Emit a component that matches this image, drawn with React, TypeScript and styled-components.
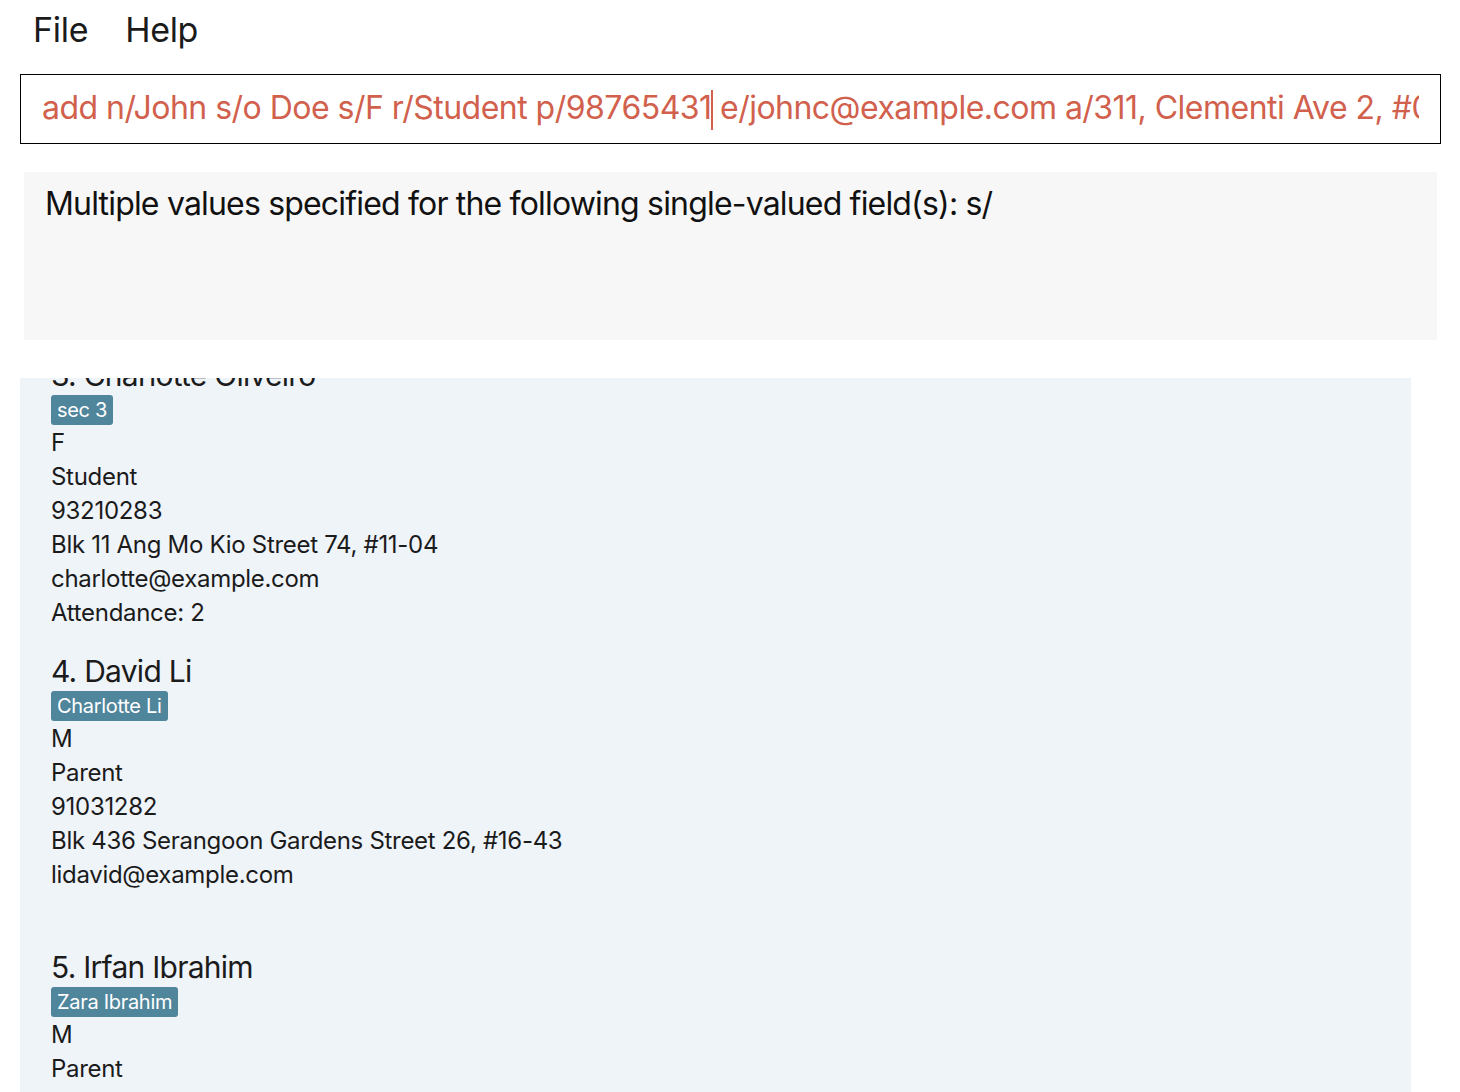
import React, { useLayoutEffect, useRef } from "react";
import styled, { createGlobalStyle } from "styled-components";

const Global = createGlobalStyle`
  html, body { margin: 0; padding: 0; background: #ffffff; }
  body { width: 1460px; height: 1092px; overflow: hidden; font-family: Inter, "Noto Sans", sans-serif; }
  * { box-sizing: border-box; }
`;

const Page = styled.div`
  display: flex;
  flex-direction: column;
  height: 1092px;
  background: #ffffff;
`;

const MenuBar = styled.nav`
  display: flex;
  height: 58px;
  align-items: center;
  padding: 0 0 0 20px;
`;

const MenuItem = styled.span`
  font-size: 34px;
  color: #1b1b1b;
  padding: 0 13px;
  margin-right: 11px;
  letter-spacing: -0.3px;
`;

const CommandBox = styled.div`
  margin: 16px 19px 0 20px;
  height: 70px;
  border: 1px solid #000000;
  display: flex;
  align-items: center;
  padding: 0 21px;
  overflow: hidden;
`;

const CommandText = styled.div`
  white-space: nowrap;
  overflow: hidden;
  font-size: 32px;
  color: #d1604d;
  letter-spacing: -0.52px;
  width: 100%;
`;

const Caret = styled.span`
  display: inline-block;
  width: 2px;
  height: 40px;
  background: #d1604d;
  vertical-align: middle;
  margin: 0 -1px;
`;

const ResultBox = styled.div`
  margin: 28px 23px 0 24px;
  height: 168px;
  background: #f7f7f7;
  padding: 12px 21px;
  font-size: 32px;
  color: #111111;
  letter-spacing: -0.82px;
`;

const ListPanel = styled.div`
  margin: 38px 49px 0 20px;
  flex: 1;
  background: #eff4f9;
  overflow: hidden;
`;

const Card = styled.div`
  padding: 12px 31px 11px 31px;
  display: flex;
  flex-direction: column;
  height: 296px;
`;

const Name = styled.div`
  font-size: 30px;
  line-height: 36px;
  color: #1b1b1b;
  letter-spacing: -0.75px;
`;

const TagRow = styled.div`
  display: flex;
  gap: 6px;
  margin: 2px 0 1px 0;
  height: 30px;
`;

const Tag = styled.span`
  background: #50869c;
  color: #ffffff;
  font-size: 20px;
  line-height: 30px;
  padding: 0 6px;
  border-radius: 3px;
  letter-spacing: -0.3px;
`;

const Line = styled.div`
  font-size: 24px;
  line-height: 34px;
  height: 34px;
  color: #1b1b1b;
  letter-spacing: -0.3px;
`;

type Person = {
  name: string;
  tag: string;
  gender: string;
  role: string;
  phone: string;
  address: string;
  email: string;
  attendance?: string;
};

const people: Person[] = [
  { name: "1. Alex Yeoh", tag: "sec 3", gender: "M", role: "Student", phone: "87438807", address: "Blk 30 Geylang Street 29, #06-40", email: "alexyeoh@example.com", attendance: "Attendance: 0" },
  { name: "2. Bernice Yu", tag: "sec 2", gender: "F", role: "Student", phone: "99272758", address: "Blk 30 Lorong 3 Serangoon Gardens, #07-18", email: "berniceyu@example.com", attendance: "Attendance: 1" },
  { name: "3. Charlotte Oliveiro", tag: "sec 3", gender: "F", role: "Student", phone: "93210283", address: "Blk 11 Ang Mo Kio Street 74, #11-04", email: "charlotte@example.com", attendance: "Attendance: 2" },
  { name: "4. David Li", tag: "Charlotte Li", gender: "M", role: "Parent", phone: "91031282", address: "Blk 436 Serangoon Gardens Street 26, #16-43", email: "lidavid@example.com" },
  { name: "5. Irfan Ibrahim", tag: "Zara Ibrahim", gender: "M", role: "Parent", phone: "92492021", address: "Blk 47 Tampines Street 20, #17-35", email: "irfan@example.com" },
];

export default function App() {
  const listRef = useRef<HTMLDivElement>(null);
  useLayoutEffect(() => {
    if (listRef.current) listRef.current.scrollTop = 296 * 2 + 33;
  }, []);
  return (
    <Page>
      <Global />
      <MenuBar>
        <MenuItem>File</MenuItem>
        <MenuItem>Help</MenuItem>
      </MenuBar>
      <CommandBox>
        <CommandText>
          add n/John s/o Doe s/F r/Student p/98765431<Caret /> e/johnc@example.com a/311, Clementi Ave 2, #02-25 t/sec 3
        </CommandText>
      </CommandBox>
      <ResultBox>Multiple values specified for the following single-valued field(s): s/</ResultBox>
      <ListPanel ref={listRef}>
        {people.map((p) => (
          <Card key={p.name}>
            <Name>{p.name}</Name>
            <TagRow>
              <Tag>{p.tag}</Tag>
            </TagRow>
            <Line>{p.gender}</Line>
            <Line>{p.role}</Line>
            <Line>{p.phone}</Line>
            <Line>{p.address}</Line>
            <Line>{p.email}</Line>
            <Line>{p.attendance ?? ""}</Line>
          </Card>
        ))}
      </ListPanel>
    </Page>
  );
}
